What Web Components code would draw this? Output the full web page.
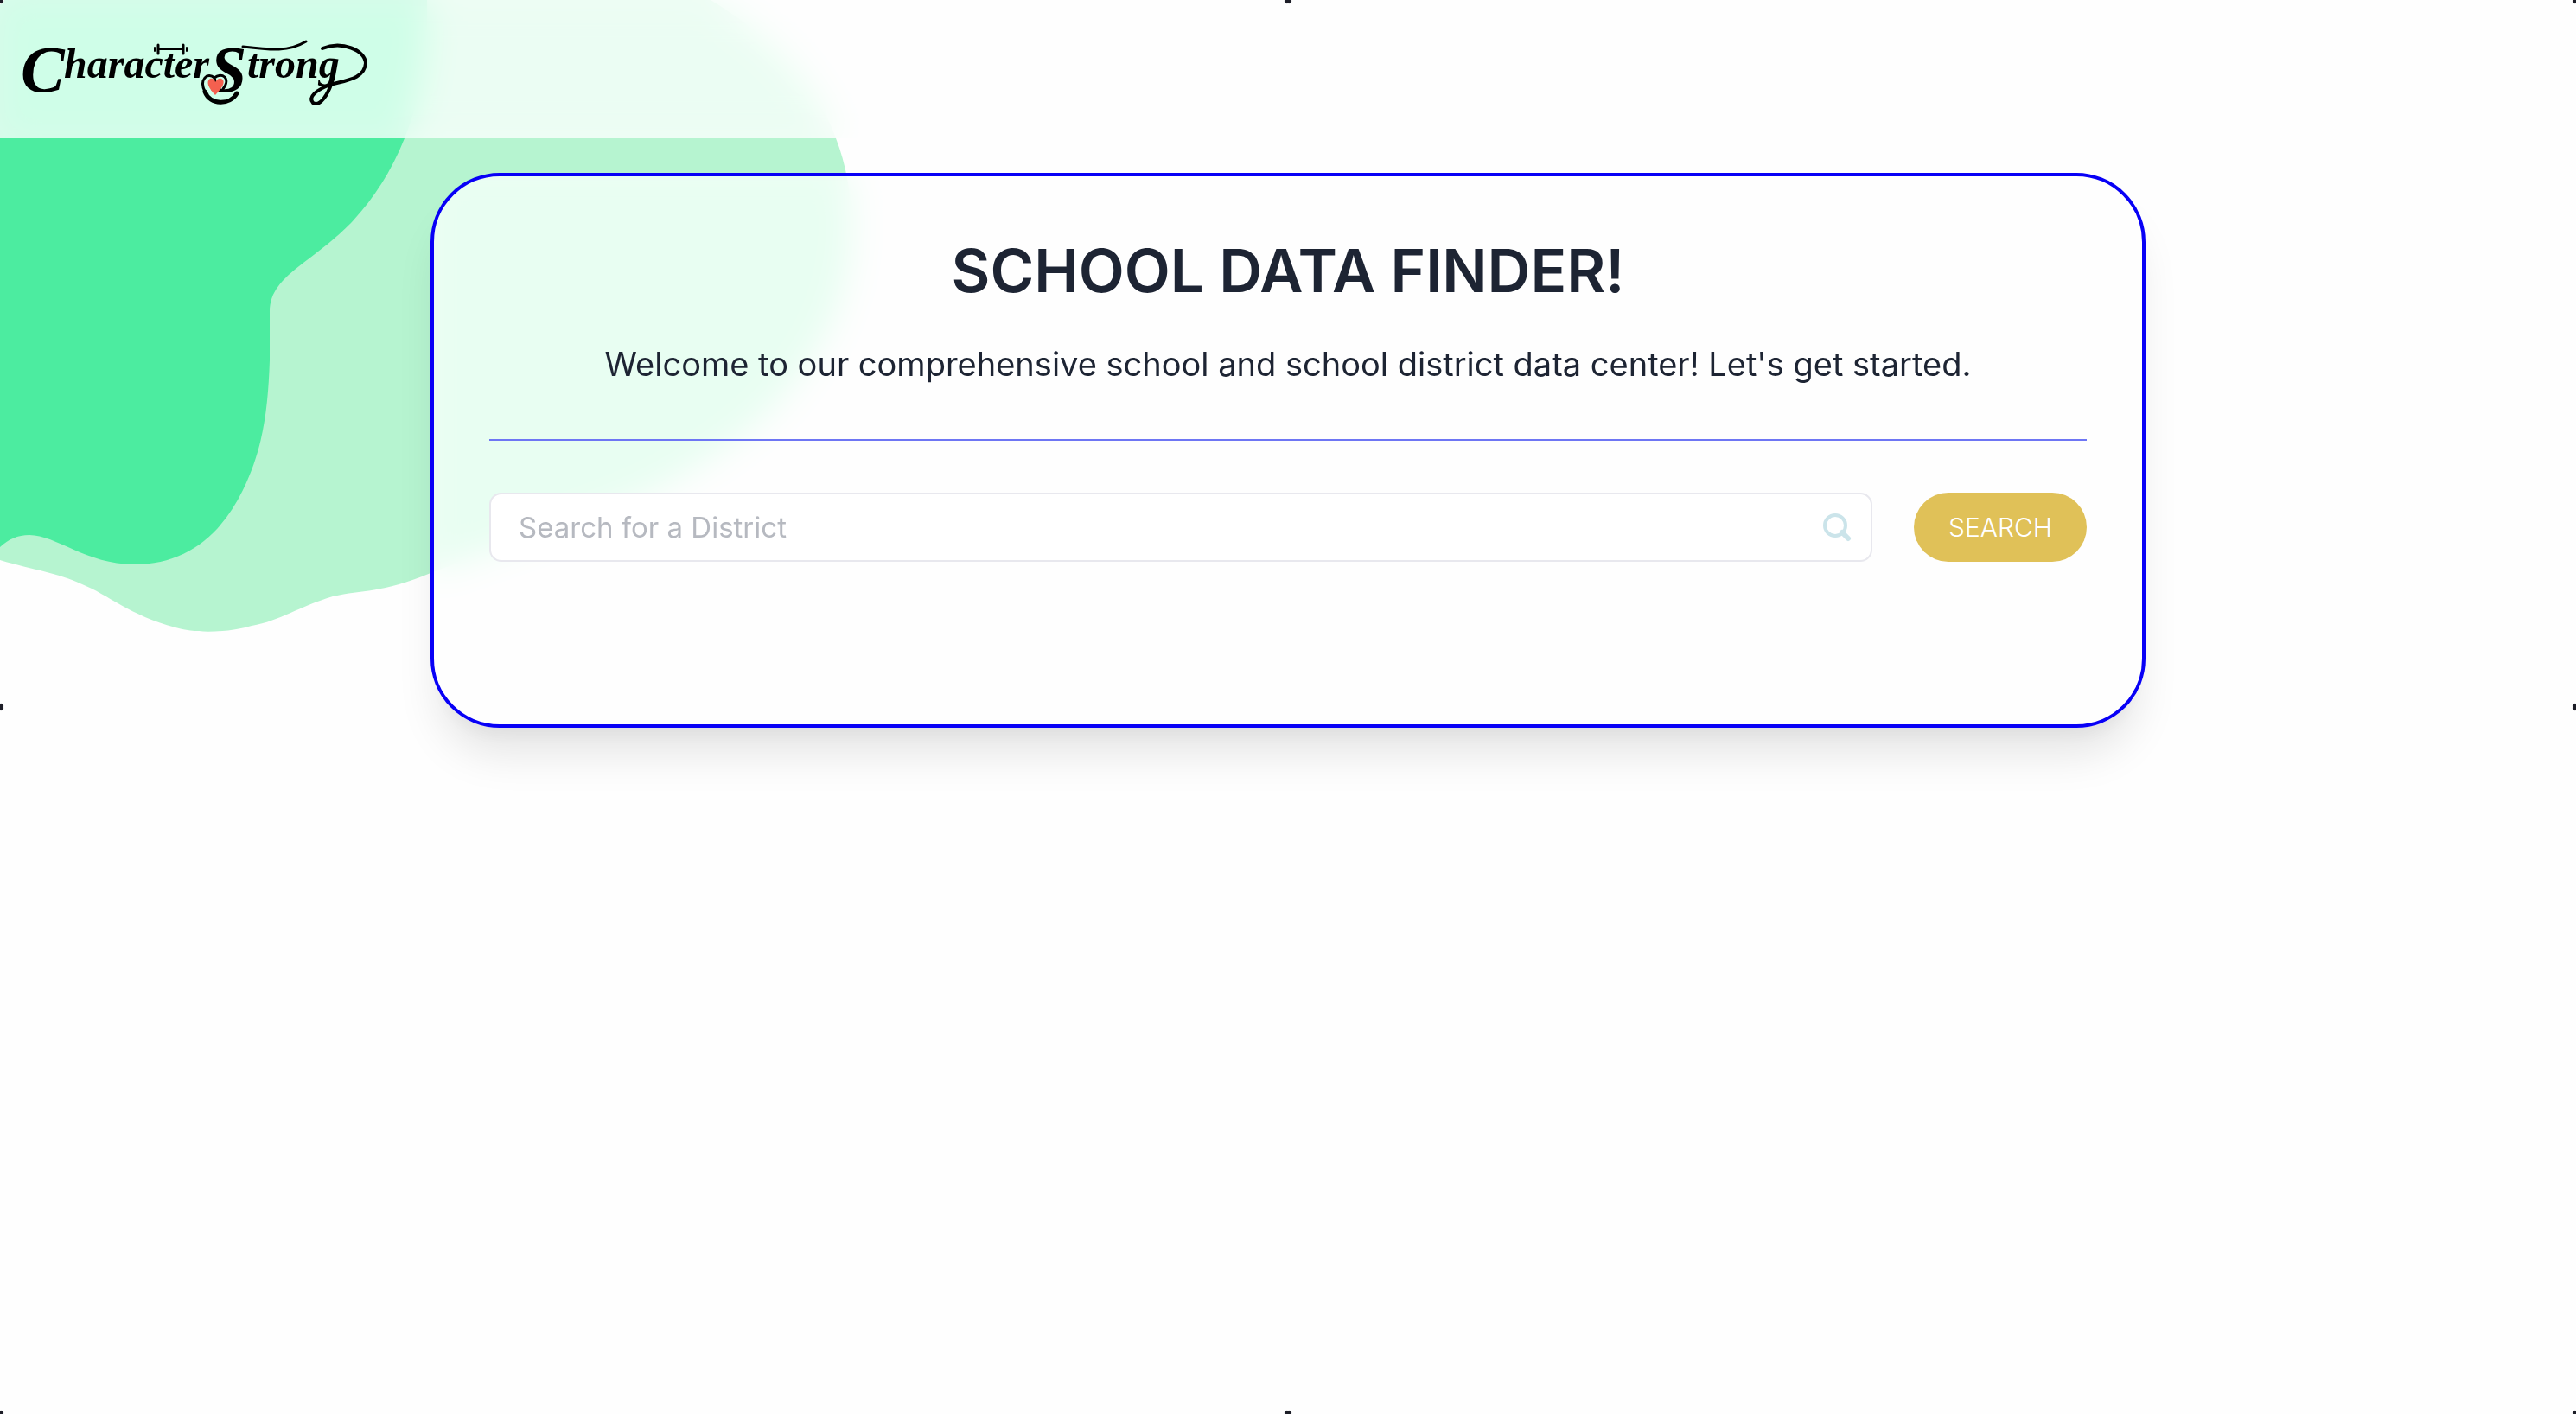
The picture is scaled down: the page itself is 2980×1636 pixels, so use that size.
<!DOCTYPE html>
<html lang="en">
<head>
<meta charset="utf-8">
<title>School Data Finder</title>
<style>
  html, body { margin: 0; min-height: 100%; }
  body {
    background: #fefefe;
    color: #1d2433;
    font-family: Inter, "Liberation Sans", sans-serif;
    --glass: rgba(254, 254, 254, 0.8);
    --frost: saturate(145%) blur(20px);
    --frost-strong: saturate(180%) blur(20px);
    --ink: #1d2433;
  }
</style>
</head>
<body>
<school-finder-app></school-finder-app>

<template id="t-app">
  <style>
    :host { display: block; position: relative; min-height: 100vh; overflow: hidden; }
    main { display: flex; justify-content: center; padding: 40px 64px; }
    finder-card { flex: 0 1 1984px; }
  </style>
  <blob-backdrop></blob-backdrop>
  <site-header></site-header>
  <main>
    <finder-card>
      <span slot="title">SCHOOL DATA FINDER!</span>
      <span slot="intro">Welcome to our comprehensive school and school district data center! Let's get started.</span>
      <district-search></district-search>
    </finder-card>
  </main>
  <frame-handles></frame-handles>
</template>

<template id="t-blob">
  <style>
    :host { position: absolute; top: 0; left: 0; z-index: -1; }
    svg { display: block; }
  </style>
  <svg width="1060" height="760" viewBox="0 0 1060 760" aria-hidden="true">
    <path fill="#b6f4d0" d="M0 0H822C868 28 940 80 967 160C998 240 990 345 934 420C895 480 850 515 766 563C690 600 600 625 498 663C440 687 420 682 385 690C345 702 325 718 291 724C265 732 225 733 203 726C150 712 125 688 95 676C65 662 40 660 0 648Z"/>
    <path fill="#4ceca0" d="M0 0H494C495 60 488 110 468 160C452 200 432 230 406 258C388 276 371 289 351 304C325 324 312 338 312 361V417C310 475 304 520 281 567C255 620 215 653 155 653C100 653 65 619 34 619C20 619 10 624 0 633Z"/>
  </svg>
</template>

<template id="t-header">
  <style>
    :host {
      display: flex; align-items: center; box-sizing: border-box;
      height: 160px; padding: 0 20px;
      background: var(--glass);
      -webkit-backdrop-filter: var(--frost); backdrop-filter: var(--frost);
    }
    a { display: block; color: #000; }
    svg { display: block; }
    text { font-family: "Liberation Serif", serif; font-style: italic; font-weight: 700; fill: #000; }
    .big { font-size: 76px; }
    .low { font-size: 48px; }
  </style>
  <a href="#" aria-label="CharacterStrong home">
    <svg width="410" height="130" viewBox="20 15 410 130">
      <text class="big" x="24" y="106">C</text>
      <text class="low" x="74" y="90">haracter</text>
      <text class="big" x="243" y="106">S</text>
      <text class="low" x="286" y="90">trong</text>
      <g fill="none" stroke="#000" stroke-width="3" stroke-linecap="round">
        <path d="M184 57H211" stroke-width="2"/>
        <path d="M183 52V62M212 52V62"/>
        <path d="M179 55V59M216 55V59" stroke-width="2"/>
        <path d="M281 54C315 58 334 60 354 48"/>
        <path d="M373 56C396 47 422 58 423 73C422 91 400 93 382 98C366 104 356 112 362 119C370 124 379 110 384 95" stroke-width="4"/>
        <path d="M237 106C230 92 240 83 248 90C256 83 268 90 258 103"/>
        <path d="M237 106C243 122 266 122 274 108" stroke-width="5"/>
      </g>
      <path fill="#f4604f" d="M249 110C241 102 238 94 243 91C246 90 249 93 249 95C251 92 253 90 256 91C262 94 257 102 249 110Z"/>
    </svg>
  </a>
</template>

<template id="t-card">
  <style>
    :host {
      display: block; box-sizing: border-box; padding: 64px;
      border: 4px solid #0800f6; border-radius: 80px;
      background: var(--glass);
      -webkit-backdrop-filter: var(--frost-strong); backdrop-filter: var(--frost-strong);
      box-shadow: 0 40px 50px -10px rgba(0, 0, 0, 0.1), 0 20px 20px -10px rgba(0, 0, 0, 0.04);
    }
    h1, p { margin: 0; text-align: center; }
    h1 { font-size: 69px; line-height: 90px; font-weight: 600; }
    p { margin-top: 36px; font-size: 38px; line-height: 54px; }
    hr { height: 2px; margin: 60px 0; border: 0; background: #6e76f4; }
    .results { min-height: 124px; }
  </style>
  <h1><slot name="title"></slot></h1>
  <p><slot name="intro"></slot></p>
  <hr>
  <slot></slot>
  <div class="results" aria-live="polite"></div>
</template>

<template id="t-search">
  <style>
    :host { display: block; }
    form { display: flex; gap: 48px; }
    .field {
      flex: 1; display: flex; align-items: center; box-sizing: border-box; height: 80px;
      padding: 0 22px 0 32px; border: 2px solid #e8e8ee; border-radius: 14px; background: #fff;
    }
    input {
      flex: 1; min-width: 0; padding: 0; border: 0; outline: 0; background: none;
      font: 33px/48px Inter, "Liberation Sans", sans-serif; color: var(--ink);
    }
    input::placeholder { color: #b6b9c0; opacity: 1; }
    svg { display: block; }
    button {
      width: 200px; height: 80px; padding: 0; border: 0; border-radius: 40px;
      background: #e0c158; color: #fff;
      font: 300 30px/48px Inter, "Liberation Sans", sans-serif;
    }
  </style>
  <form>
    <label class="field">
      <input type="text" placeholder="Search for a District" aria-label="Search for a District">
      <svg width="34" height="34" viewBox="0 0 34 34" fill="none" stroke="#cbe4ea" aria-hidden="true">
        <circle cx="15" cy="15" r="12" stroke-width="4"/>
        <path d="M23 23L30 30" stroke-width="6" stroke-linecap="round"/>
      </svg>
    </label>
    <button type="button">SEARCH</button>
  </form>
</template>

<template id="t-handles">
  <style>
    :host { position: fixed; inset: 0; pointer-events: none; overflow: hidden; }
    i { position: absolute; width: 8px; height: 8px; margin: -5px; border: 1px solid #fff; border-radius: 50%; background: #1d1e28; }
    .t { top: 0; } .b { bottom: 0; } .l { left: 0; } .r { right: 0; }
    .m { top: 50%; } .c { left: 50%; }
  </style>
  <i class="t l"></i><i class="t c"></i><i class="t r"></i>
  <i class="m l"></i><i class="m r"></i>
  <i class="b l"></i><i class="b c"></i><i class="b r"></i>
</template>

<script>
  const define = (name, templateId) => {
    customElements.define(name, class extends HTMLElement {
      constructor() {
        super();
        const template = document.getElementById(templateId);
        this.attachShadow({ mode: "open" }).append(template.content.cloneNode(true));
      }
    });
  };
  define("blob-backdrop", "t-blob");
  define("site-header", "t-header");
  define("finder-card", "t-card");
  define("district-search", "t-search");
  define("frame-handles", "t-handles");
  define("school-finder-app", "t-app");
</script>
</body>
</html>
